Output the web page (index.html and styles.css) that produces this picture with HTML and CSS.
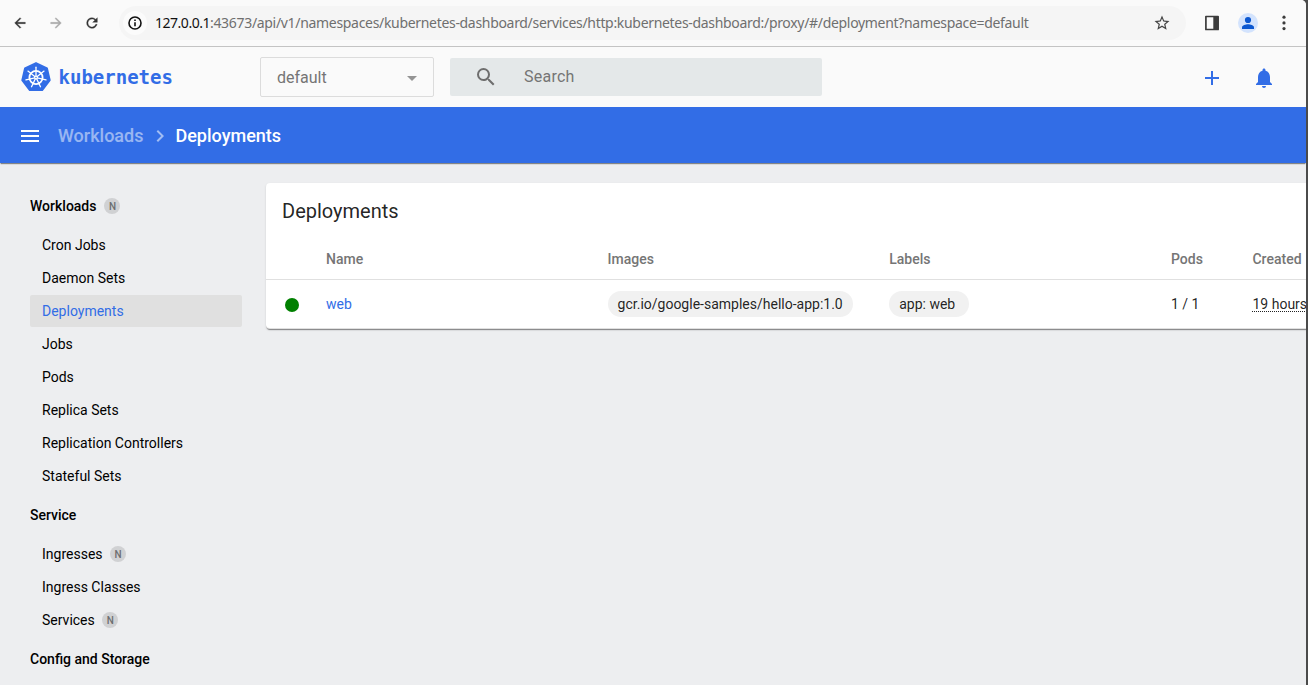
FILE: index.html
```html
<!DOCTYPE html>
<html lang="en">
<head>
<meta charset="utf-8">
<title>Kubernetes Dashboard</title>
<link rel="stylesheet" href="styles.css">
</head>
<body>
<div class="desktop">
<div class="window">
  <div class="browser-bar">
    <svg class="nav-icon" viewBox="0 0 24 24"><path d="M20 11H7.83l5.59-5.59L12 4l-8 8 8 8 1.41-1.41L7.83 13H20z"/></svg>
    <svg class="nav-icon disabled" viewBox="0 0 24 24"><path d="M12 4l-1.41 1.41L16.17 11H4v2h12.17l-5.58 5.59L12 20l8-8z"/></svg>
    <svg class="nav-icon" viewBox="0 0 24 24"><path d="M17.65 6.35A7.96 7.96 0 0 0 12 4a8 8 0 1 0 7.73 10h-2.08A6 6 0 1 1 12 6c1.66 0 3.14.69 4.22 1.78L13 11h7V4z"/></svg>
    <div class="omnibox">
      <span class="site-info"><svg viewBox="0 0 16 16"><circle cx="8" cy="8" r="6" fill="none" stroke="#111" stroke-width="1.6"/><path d="M7.2 7.2h1.6v4H7.2zM7.2 4.6h1.6v1.5H7.2z" fill="#111"/></svg></span>
      <span class="url"><span class="host">127.0.0.1</span><span class="path">:43673/api/v1/namespaces/kubernetes-dashboard/services/http:kubernetes-dashboard:/proxy/#/deployment?namespace=default</span></span>
      <svg class="star" viewBox="0 0 24 24"><path d="M22 9.24l-7.19-.62L12 2 9.19 8.63 2 9.24l5.46 4.73L5.82 21 12 17.27 18.18 21l-1.63-7.03zM12 15.4l-3.76 2.27 1-4.28-3.32-2.88 4.38-.38L12 6.1l1.71 4.04 4.38.38-3.32 2.88 1 4.28z"/></svg>
    </div>
    <svg class="panel" viewBox="0 0 16 16"><path d="M1.9 1.5h12.2v13H1.9z" fill="none" stroke="#3c3c3c" stroke-width="1.7" stroke-linejoin="round"/><path d="M9.3 1.5H14.5v13H9.3z" fill="#3c3c3c"/></svg>
    <svg class="profile" viewBox="0 0 20 20"><circle cx="10" cy="10" r="10" fill="#d3e3fd"/><circle cx="10" cy="7" r="3.1" fill="#0b57d0"/><path d="M4 16v-1.6C4 12.2 7.8 11.300 10 11.300s6 .9 6 3.100V16z" fill="#0b57d0"/></svg>
    <svg class="dots" viewBox="0 0 4 16"><circle cx="2" cy="2.200" r="1.600"/><circle cx="2" cy="7.900" r="1.600"/><circle cx="2" cy="13.600" r="1.600"/></svg>
  </div>

  <header class="header">
    <div class="logo">
      <svg class="logo-mark" viewBox="0 0 30 30">
        <path d="M15 .9 26.100 6.200 28.900 18.300 21.300 28.200H8.700L1.100 18.300 3.900 6.200z" fill="#326de6" stroke="#326de6" stroke-width="1.600" stroke-linejoin="round"/>
        <g fill="none" stroke="#fff">
          <circle cx="15" cy="15.500" r="6.600" stroke-width="1.800"/>
          <g stroke-width="1.300" stroke-linecap="round">
            <path id="spoke" d="M15 14.300V5.200"/>
            <use href="#spoke" transform="rotate(51.430 15 15.500)"/>
            <use href="#spoke" transform="rotate(102.860 15 15.500)"/>
            <use href="#spoke" transform="rotate(154.290 15 15.500)"/>
            <use href="#spoke" transform="rotate(205.710 15 15.500)"/>
            <use href="#spoke" transform="rotate(257.140 15 15.500)"/>
            <use href="#spoke" transform="rotate(308.570 15 15.500)"/>
          </g>
        </g>
        <circle cx="15" cy="15.500" r="1.900" fill="#fff"/><circle cx="15" cy="15.500" r=".7" fill="#326de6"/>
      </svg>
      <span class="logo-text">kubernetes</span>
    </div>
    <div class="namespace"><span>default</span><i class="caret"></i></div>
    <div class="search">
      <svg viewBox="0 0 24 24"><path d="M15.500 14h-.79l-.28-.27A6.471 6.471 0 0 0 16 9.500 6.500 6.500 0 1 0 9.500 16c1.610 0 3.090-.59 4.230-1.570l.27.28v.79l5 4.990L20.490 19l-4.990-5zm-6 0C7.010 14 5 11.990 5 9.500S7.010 5 9.500 5 14 7.010 14 9.500 11.990 14 9.500 14z"/></svg>
      <span>Search</span>
    </div>
    <div class="actions">
      <svg viewBox="0 0 24 24"><path d="M19 13h-6v6h-2v-6H5v-2h6V5h2v6h6z"/></svg>
      <svg viewBox="0 0 24 24"><path d="M12 22c1.100 0 2-.9 2-2h-4c0 1.100.9 2 2 2zm6-6v-5c0-3.070-1.630-5.640-4.500-6.320V4c0-.83-.67-1.500-1.500-1.500s-1.500.67-1.500 1.500v.68C7.640 5.360 6 7.920 6 11v5l-2 2v1h16v-1z"/></svg>
    </div>
  </header>

  <div class="crumbs">
    <svg class="menu" viewBox="0 0 24 24"><path d="M3 18h18v-2H3zm0-5h18v-2H3zm0-7v2h18V6z"/></svg>
    <span class="crumb-parent">Workloads</span>
    <svg class="chevron" viewBox="0 0 24 24"><path d="M10 6 8.590 7.410 13.170 12l-4.580 4.590L10 18l6-6z"/></svg>
    <span class="crumb">Deployments</span>
  </div>

  <div class="body">
    <nav class="sidebar">
      <div class="group">Workloads <span class="badge">N</span></div>
      <div class="item">Cron Jobs</div>
      <div class="item">Daemon Sets</div>
      <div class="item active">Deployments</div>
      <div class="item">Jobs</div>
      <div class="item">Pods</div>
      <div class="item">Replica Sets</div>
      <div class="item">Replication Controllers</div>
      <div class="item">Stateful Sets</div>
      <div class="group">Service</div>
      <div class="item">Ingresses <span class="badge">N</span></div>
      <div class="item">Ingress Classes</div>
      <div class="item">Services <span class="badge">N</span></div>
      <div class="group">Config and Storage</div>
    </nav>
    <main class="card">
      <h1 class="card-title">Deployments</h1>
      <div class="row head"><span></span><span>Name</span><span>Images</span><span>Labels</span><span>Pods</span><span>Created</span></div>
      <div class="row">
        <span><i class="status"></i></span>
        <span class="link">web</span>
        <span><b class="chip">gcr.io/google-samples/hello-app:1.0</b></span>
        <span><b class="chip label">app: web</b></span>
        <span>1 / 1</span>
        <span><u class="age">19 hours</u></span>
      </div>
    </main>
  </div>
</div>
</div>
</body>
</html>
```
FILE: styles.css
```css
* { box-sizing: border-box; }
body { margin: 0; font-family: Roboto, sans-serif; font-size: 14px; color: rgba(0,0,0,.87); }
svg { display: block; flex: none; }
.desktop { height: 685px; overflow: hidden; background: #4b4b4b; }
.window { width: 1306px; height: 685px; overflow: hidden; background: #edeef0; display: flex; flex-direction: column; border-top-right-radius: 5px; }

.browser-bar { flex: none; height: 47px; padding-left: 12px; display: flex; align-items: center; background: #fafafa; border-bottom: 1px solid #c4c4c4; }
.nav-icon { width: 16px; height: 16px; margin-right: 20px; fill: #333; stroke: #333; stroke-width: .5; }
.nav-icon.disabled { fill: #a8a8a8; stroke: #a8a8a8; }
.omnibox { width: 1067px; height: 34px; margin: 0 18px 0 -1px; padding: 0 15px 0 4px; display: flex; align-items: center; border-radius: 17px; background: #f5f5f5; }
.site-info { flex: none; width: 24px; height: 24px; padding: 4px; border-radius: 50%; background: #fbfbfb; margin-right: 8px; }
.site-info svg { width: 16px; height: 16px; }
.url { flex: 1; display: flex; white-space: nowrap; font: 14px/20px "Noto Sans", sans-serif; color: #6f6f6f; }
.host { color: #111; letter-spacing: -.48px; }
.path { letter-spacing: -.315px; }
.star { width: 18px; height: 18px; fill: #444; }
.panel { width: 16px; height: 16px; margin-right: 18px; }
.profile { width: 20px; height: 20px; margin-right: 24px; }
.dots { width: 4px; height: 16px; fill: #3c3c3c; }

.header { flex: none; height: 60px; padding-left: 21px; display: flex; align-items: center; background: #fafafa; }
.logo { width: 239px; display: flex; align-items: center; gap: 7.5px; }
.logo-mark { width: 30px; height: 30px; }
.logo-text { font: bold 19px/24px "DejaVu Sans Mono", monospace; color: #326de6; }
.namespace { width: 174px; height: 40px; margin-right: 16px; padding: 0 16px; display: flex; align-items: center; justify-content: space-between; border: 1px solid #dcdcdc; border-radius: 2px; font-size: 16px; color: #757575; }
.caret { border: 5px solid transparent; border-top-color: #949494; border-bottom: 0; margin-top: 2px; }
.search { width: 372px; height: 38px; padding-left: 24px; margin-bottom: 1px; display: flex; align-items: center; gap: 26px; border-radius: 2px; background: #e4e8e9; font-size: 16px; letter-spacing: .25px; color: #757575; }
.search svg { width: 24px; height: 24px; fill: #6e6e6e; }
.actions { margin-left: auto; margin-right: 30px; padding-top: 2px; display: flex; gap: 28px; fill: #326de6; }
.actions svg { width: 24px; height: 24px; }

.crumbs { flex: none; height: 56px; padding-left: 18px; position: relative; display: flex; align-items: center; background: #326de6; color: #fff; fill: #fff; font-size: 18px; font-weight: 500; box-shadow: 0 2px 1px -1px rgba(0,0,0,.35), 0 1px 1px rgba(0,0,0,.14); }
.menu { width: 24px; height: 24px; margin: 2px 16px 0 0; }
.crumb-parent { opacity: .5; }
.chevron { width: 24px; height: 24px; margin: 1px 3.5px 0 4.5px; opacity: .55; }

.body { flex: 1; display: flex; align-items: flex-start; }
.sidebar { flex: none; width: 242px; padding: 20px 0 0 30px; margin-right: 24px; color: #000; }
.group, .item { display: flex; align-items: center; gap: 8px; }
.group { height: 42px; font-weight: 500; margin: 2px 0; }
.item { height: 32px; margin-bottom: 1px; padding-left: 12px; border-radius: 2px; }
.item.active { background: #e0e0e0; color: #326de6; }
.badge { width: 16px; height: 16px; border-radius: 50%; background: #d0d1d3; color: #6c6e70; font-size: 10px; font-weight: 500; line-height: 17px; text-align: center; }
.item .badge { margin-left: -.6px; }
.card { flex: none; width: 1100px; height: 146px; margin-top: 20px; background: #fff; border-bottom: 1px solid #e0e0e0; border-radius: 4px; box-shadow: 0 2px 1px -1px rgba(0,0,0,.32), 0 1px 1px rgba(0,0,0,.14), 0 1px 3px rgba(0,0,0,.08); }
.card-title { height: 56px; margin: 0; padding-left: 16px; font-size: 20px; font-weight: 400; line-height: 56px; }
.row { height: 48px; display: grid; grid-template-columns: 60px 281.600px 281.600px 281.800px 81.500px 1fr; align-items: center; white-space: nowrap; }
.head { height: 41px; border-bottom: 1px solid #e0e0e0; font-weight: 500; color: #757575; }
.link { color: #326de6; }
.status { display: block; width: 14px; height: 14px; margin: 2px 0 0 19px; border-radius: 50%; background: green; }
.chip { display: block; width: max-content; height: 26px; padding: 0 10px; border-radius: 13px; background: #f1f1f1; font-weight: 400; line-height: 26px; }
.chip.label { padding-right: 14px; }
.age { display: inline-block; height: 16px; line-height: 17px; text-decoration: none; vertical-align: top; border-bottom: 1px dotted #222; }
```
